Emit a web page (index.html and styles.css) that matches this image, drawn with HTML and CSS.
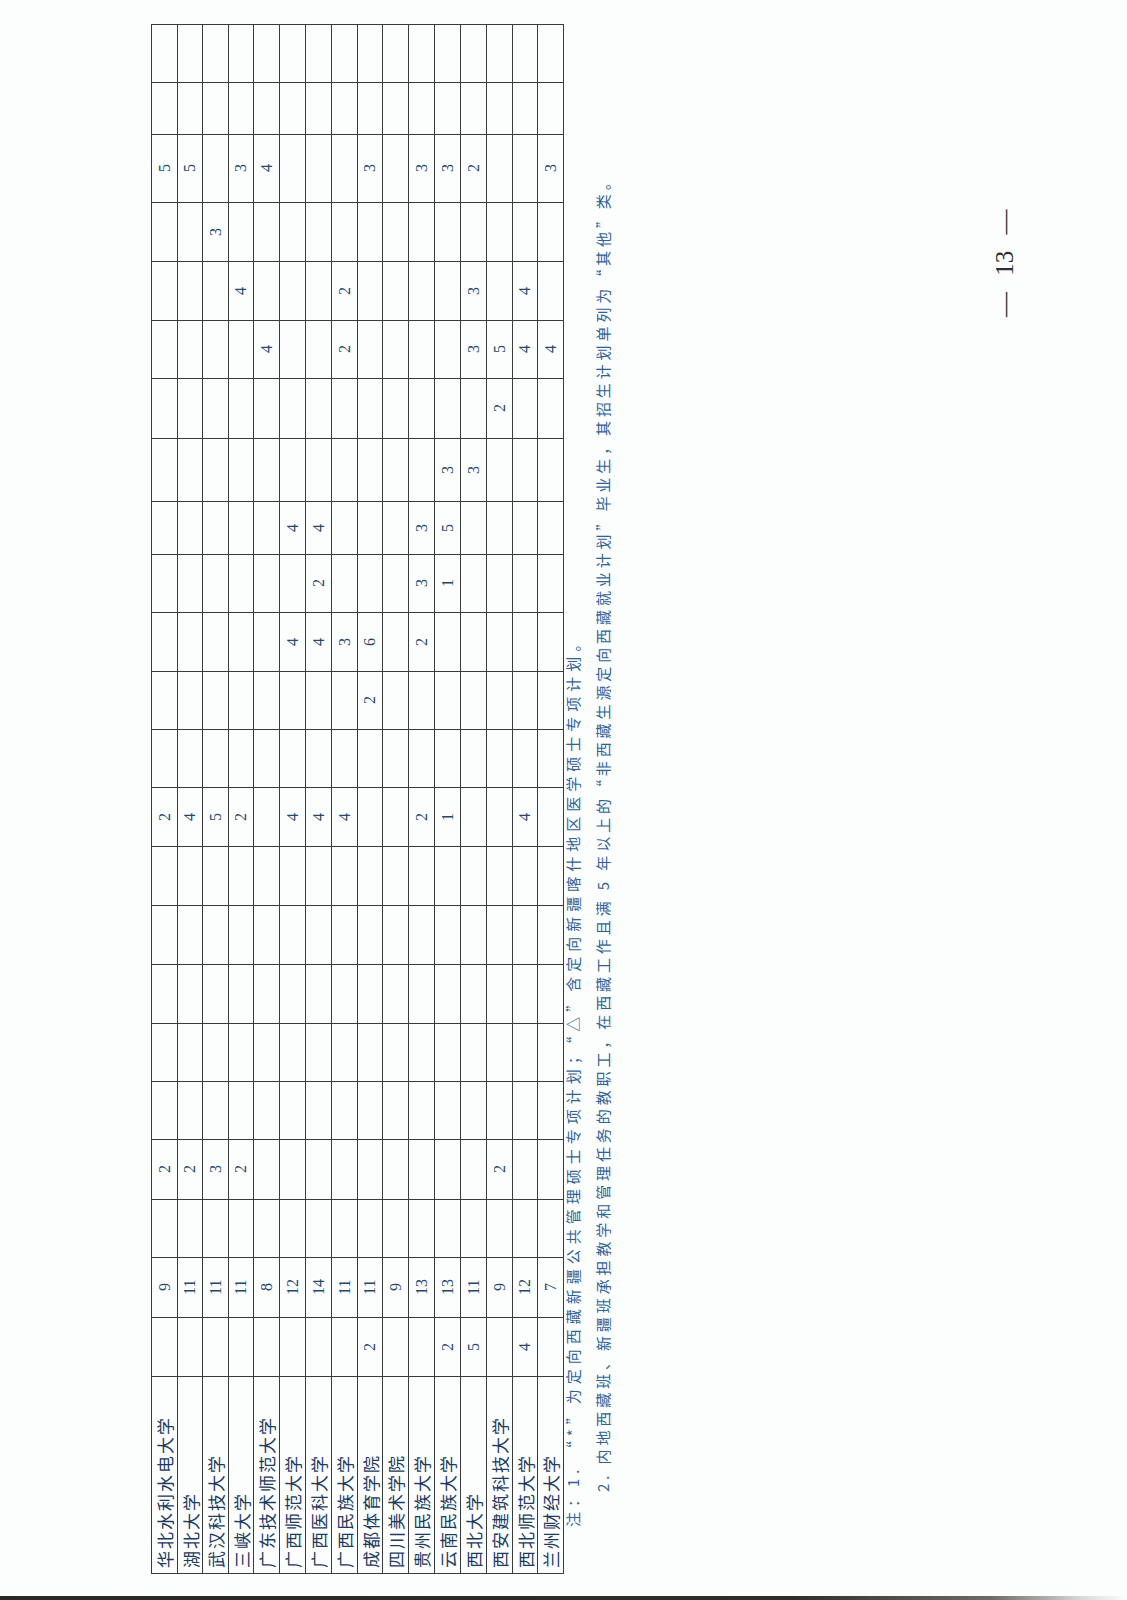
FILE: index.html
```html
<!DOCTYPE html>
<html lang="zh-CN">
<head>
<meta charset="utf-8">
<title>招生计划表 第13页</title>
<link rel="stylesheet" href="styles.css">
</head>
<body>
<div class="sheet">
  <div class="edge"></div>
  <div class="content">
    <div class="plan">
      <span class="nm">华北水利水电大学</span><span></span><span>9</span><span></span><span>2</span><span></span><span></span><span></span><span></span><span></span><span>2</span><span></span><span></span><span></span><span></span><span></span><span></span><span></span><span></span><span></span><span></span><span>5</span><span></span><span></span>
      <span class="nm">湖北大学</span><span></span><span>11</span><span></span><span>2</span><span></span><span></span><span></span><span></span><span></span><span>4</span><span></span><span></span><span></span><span></span><span></span><span></span><span></span><span></span><span></span><span></span><span>5</span><span></span><span></span>
      <span class="nm">武汉科技大学</span><span></span><span>11</span><span></span><span>3</span><span></span><span></span><span></span><span></span><span></span><span>5</span><span></span><span></span><span></span><span></span><span></span><span></span><span></span><span></span><span></span><span>3</span><span></span><span></span><span></span>
      <span class="nm">三峡大学</span><span></span><span>11</span><span></span><span>2</span><span></span><span></span><span></span><span></span><span></span><span>2</span><span></span><span></span><span></span><span></span><span></span><span></span><span></span><span></span><span>4</span><span></span><span>3</span><span></span><span></span>
      <span class="nm">广东技术师范大学</span><span></span><span>8</span><span></span><span></span><span></span><span></span><span></span><span></span><span></span><span></span><span></span><span></span><span></span><span></span><span></span><span></span><span></span><span>4</span><span></span><span></span><span>4</span><span></span><span></span>
      <span class="nm">广西师范大学</span><span></span><span>12</span><span></span><span></span><span></span><span></span><span></span><span></span><span></span><span>4</span><span></span><span></span><span>4</span><span></span><span>4</span><span></span><span></span><span></span><span></span><span></span><span></span><span></span><span></span>
      <span class="nm">广西医科大学</span><span></span><span>14</span><span></span><span></span><span></span><span></span><span></span><span></span><span></span><span>4</span><span></span><span></span><span>4</span><span>2</span><span>4</span><span></span><span></span><span></span><span></span><span></span><span></span><span></span><span></span>
      <span class="nm">广西民族大学</span><span></span><span>11</span><span></span><span></span><span></span><span></span><span></span><span></span><span></span><span>4</span><span></span><span></span><span>3</span><span></span><span></span><span></span><span></span><span>2</span><span>2</span><span></span><span></span><span></span><span></span>
      <span class="nm">成都体育学院</span><span>2</span><span>11</span><span></span><span></span><span></span><span></span><span></span><span></span><span></span><span></span><span></span><span>2</span><span>6</span><span></span><span></span><span></span><span></span><span></span><span></span><span></span><span>3</span><span></span><span></span>
      <span class="nm">四川美术学院</span><span></span><span>9</span><span></span><span></span><span></span><span></span><span></span><span></span><span></span><span></span><span></span><span></span><span></span><span></span><span></span><span></span><span></span><span></span><span></span><span></span><span></span><span></span><span></span>
      <span class="nm">贵州民族大学</span><span></span><span>13</span><span></span><span></span><span></span><span></span><span></span><span></span><span></span><span>2</span><span></span><span></span><span>2</span><span>3</span><span>3</span><span></span><span></span><span></span><span></span><span></span><span>3</span><span></span><span></span>
      <span class="nm">云南民族大学</span><span>2</span><span>13</span><span></span><span></span><span></span><span></span><span></span><span></span><span></span><span>1</span><span></span><span></span><span></span><span>1</span><span>5</span><span>3</span><span></span><span></span><span></span><span></span><span>3</span><span></span><span></span>
      <span class="nm">西北大学</span><span>5</span><span>11</span><span></span><span></span><span></span><span></span><span></span><span></span><span></span><span></span><span></span><span></span><span></span><span></span><span></span><span>3</span><span></span><span>3</span><span>3</span><span></span><span>2</span><span></span><span></span>
      <span class="nm">西安建筑科技大学</span><span></span><span>9</span><span></span><span>2</span><span></span><span></span><span></span><span></span><span></span><span></span><span></span><span></span><span></span><span></span><span></span><span></span><span>2</span><span>5</span><span></span><span></span><span></span><span></span><span></span>
      <span class="nm">西北师范大学</span><span>4</span><span>12</span><span></span><span></span><span></span><span></span><span></span><span></span><span></span><span>4</span><span></span><span></span><span></span><span></span><span></span><span></span><span></span><span>4</span><span>4</span><span></span><span></span><span></span><span></span>
      <span class="nm">兰州财经大学</span><span></span><span>7</span><span></span><span></span><span></span><span></span><span></span><span></span><span></span><span></span><span></span><span></span><span></span><span></span><span></span><span></span><span></span><span>4</span><span></span><span></span><span>3</span><span></span><span></span>
    </div>
    <div class="notes">
      <p class="note first">注：1. “*”为定向西藏新疆公共管理硕士专项计划；“△”含定向新疆喀什地区医学硕士专项计划。</p>
      <p class="note second">2. 内地西藏班、新疆班承担教学和管理任务的教职工，在西藏工作且满 5 年以上的“非西藏生源定向西藏就业计划”毕业生，其招生计划单列为“其他”类。</p>
    </div>
    <div class="footer">
      <span class="pageno">— 13 —</span>
    </div>
  </div>
</div>
</body>
</html>
```
FILE: styles.css
```css
html, body {
  margin: 0;
  padding: 0;
  width: 1127px;
  height: 1600px;
  overflow: hidden;
  background: #fcfdfd;
}

/*
  The page is a landscape document printed sideways on a portrait sheet.
  Lines run bottom-to-top (inline axis), and follow each other left-to-right
  (block axis): vertical-rl with sideways glyphs, turned half a turn.
*/
.sheet {
  width: 1127px;
  height: 1600px;
  writing-mode: vertical-rl;
  text-orientation: sideways;
  display: flex;
  background: #fcfdfd;
  transform: rotate(180deg);
}

.edge {
  flex: none;
  inline-size: 4px;
  background: linear-gradient(to left, #2b2724 0%, #312c28 70%, #6f6a65 88%, #d9d9d9 96%, #fcfdfd 100%);
}

.content {
  flex: 1;
  padding-block-start: 151px;
  padding-inline-start: 22px;
}

.plan {
  display: grid;
  inline-size: 1549px;
  grid-template-columns:
    197px 59px 60px 58px 60px 58px 58px 59px 59px 59px 59px 58px
    58px 59px 58px 53px 63px 60px 58px 59px 59px 68px 52px 58px;
  grid-template-rows: 26px 25px 26px 25px 26px 26px 26px 26px 25px 26px 26px 26px 26px 26px 25px 26px;
  border-block-start: 1px solid #3a3a3a;
  border-inline-start: 1px solid #3a3a3a;
}

.plan > span {
  box-sizing: border-box;
  display: flex;
  align-items: center;
  justify-content: center;
  border-inline-end: 1px solid #3a3a3a;
  border-block-end: 1px solid #3a3a3a;
  font-family: "Liberation Serif", serif;
  font-size: 16px;
  line-height: 1;
  color: #24476e;
}

.plan > .nm {
  justify-content: flex-start;
  padding-inline-start: 5px;
  font-family: "Noto Sans CJK SC", sans-serif;
  font-size: 17px;
  letter-spacing: 2px;
  white-space: nowrap;
  color: #1d3a5f;
}

.notes {
  margin-block-start: -6px;
}

.note {
  margin: 0;
  block-size: 30px;
  line-height: 30px;
  font-family: "Noto Sans CJK SC", sans-serif;
  font-size: 15px;
  white-space: nowrap;
  color: #2f6397;
}

.note.first {
  padding-inline-start: 47px;
  letter-spacing: 5px;
}

.note.second {
  padding-inline-start: 82px;
  letter-spacing: 3.9px;
}

.footer {
  margin-block-start: 372px;
  block-size: 30px;
  display: flex;
  justify-content: flex-end;
  padding-inline-end: 210px;
}

.pageno {
  font-family: "Liberation Serif", serif;
  font-size: 25px;
  line-height: 30px;
  word-spacing: 10px;
  color: #2e2e2e;
}
```
